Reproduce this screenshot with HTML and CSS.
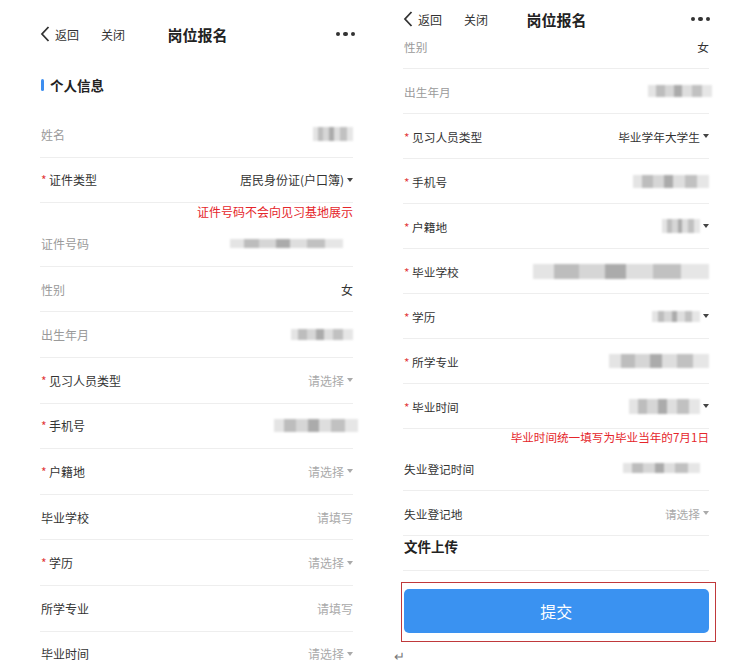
FILE: index.html
```html
<!DOCTYPE html>
<html lang="zh-CN">
<head>
    <meta charset="UTF-8">
    <meta name="viewport" content="width=device-width, initial-scale=1.0">
    <title>岗位报名</title>
    <link rel="stylesheet" href="styles.css">
</head>
<body>
    <!-- 左侧截图 -->
    <div class="phone phone-left">
        <div class="nav">
            <div class="nav-left">
                <svg class="back" width="10" height="16" viewBox="0 0 10 16"><path d="M8.5 1 L2 8 L8.5 15" fill="none" stroke="#333" stroke-width="1.8"/></svg>
                <span class="nav-link">返回</span>
                <span class="nav-link close">关闭</span>
            </div>
            <div class="nav-title">岗位报名</div>
            <div class="nav-more"><i></i><i></i><i></i></div>
        </div>

        <div class="section"><span class="bar"></span>个人信息</div>

        <div class="form">
            <div class="field">
                <span class="label muted">姓名</span>
                <span class="blur blur-name"></span>
            </div>
            <div class="field">
                <span class="label req">证件类型</span>
                <span class="value">居民身份证(户口簿)<i class="caret dark"></i></span>
            </div>
            <div class="note">证件号码不会向见习基地展示</div>
            <div class="field">
                <span class="label muted">证件号码</span>
                <span class="blur blur-id"></span>
            </div>
            <div class="field">
                <span class="label muted">性别</span>
                <span class="value">女</span>
            </div>
            <div class="field">
                <span class="label muted">出生年月</span>
                <span class="blur blur-birth"></span>
            </div>
            <div class="field">
                <span class="label req">见习人员类型</span>
                <span class="value placeholder">请选择<i class="caret"></i></span>
            </div>
            <div class="field">
                <span class="label req">手机号</span>
                <span class="blur blur-phone"></span>
            </div>
            <div class="field">
                <span class="label req">户籍地</span>
                <span class="value placeholder">请选择<i class="caret"></i></span>
            </div>
            <div class="field">
                <span class="label">毕业学校</span>
                <span class="value placeholder">请填写</span>
            </div>
            <div class="field">
                <span class="label req">学历</span>
                <span class="value placeholder">请选择<i class="caret"></i></span>
            </div>
            <div class="field">
                <span class="label">所学专业</span>
                <span class="value placeholder">请填写</span>
            </div>
            <div class="field">
                <span class="label">毕业时间</span>
                <span class="value placeholder">请选择<i class="caret"></i></span>
            </div>
        </div>
    </div>

    <!-- 右侧截图（已向下滚动） -->
    <div class="phone phone-right">
        <div class="nav nav-fixed">
            <div class="nav-left">
                <svg class="back" width="10" height="16" viewBox="0 0 10 16"><path d="M8.5 1 L2 8 L8.5 15" fill="none" stroke="#333" stroke-width="1.8"/></svg>
                <span class="nav-link">返回</span>
                <span class="nav-link close">关闭</span>
            </div>
            <div class="nav-title">岗位报名</div>
            <div class="nav-more"><i></i><i></i><i></i></div>
        </div>

        <div class="form form-scrolled">
            <div class="field">
                <span class="label muted">性别</span>
                <span class="value">女</span>
            </div>
            <div class="field">
                <span class="label muted">出生年月</span>
                <span class="blur blur-birth2"></span>
            </div>
            <div class="field">
                <span class="label req">见习人员类型</span>
                <span class="value">毕业学年大学生<i class="caret dark"></i></span>
            </div>
            <div class="field">
                <span class="label req">手机号</span>
                <span class="blur blur-phone2"></span>
            </div>
            <div class="field">
                <span class="label req">户籍地</span>
                <span class="value"><span class="blur blur-hukou"></span><i class="caret dark"></i></span>
            </div>
            <div class="field">
                <span class="label req">毕业学校</span>
                <span class="blur blur-school"></span>
            </div>
            <div class="field">
                <span class="label req">学历</span>
                <span class="value"><span class="blur blur-edu"></span><i class="caret dark"></i></span>
            </div>
            <div class="field">
                <span class="label req">所学专业</span>
                <span class="blur blur-major"></span>
            </div>
            <div class="field">
                <span class="label req">毕业时间</span>
                <span class="value"><span class="blur blur-grad"></span><i class="caret dark"></i></span>
            </div>
            <div class="note">毕业时间统一填写为毕业当年的7月1日</div>
            <div class="field">
                <span class="label">失业登记时间</span>
                <span class="blur blur-unemp"></span>
            </div>
            <div class="field">
                <span class="label">失业登记地</span>
                <span class="value placeholder">请选择<i class="caret"></i></span>
            </div>
            <div class="upload">文件上传</div>
        </div>

        <div class="submit-wrap">
            <button class="submit">提交</button>
        </div>
        <div class="return-mark">↵</div>
    </div>
</body>
</html>
```

FILE: styles.css
```css
body {
    display: flex;
    height: 666px;
    margin: 0;
    overflow: hidden;
    background: #fff;
    color: #333;
    font-family: "Noto Sans CJK SC", "Noto Sans", sans-serif;
}

.phone {
    flex: none;
}

.phone-left {
    width: 315px;
    margin-left: 40px;
}

.phone-right {
    width: 307px;
    margin-left: 48px;
}

/* 顶部导航 */
.nav {
    display: grid;
    grid-template-columns: 1fr auto 1fr;
    align-items: center;
    height: 68px;
}

.nav-fixed {
    position: relative;
    z-index: 1;
    height: 38px;
    background: #fff;
}

.nav-left {
    display: flex;
    align-items: center;
}

.back {
    display: block;
}

.nav-link {
    margin-left: 5px;
    font-size: 12px;
    color: #333;
}

.nav-link.close {
    margin-left: 22px;
}

.nav-title {
    font-size: 15px;
    font-weight: bold;
    color: #222;
}

.nav-more {
    display: flex;
    justify-content: flex-end;
    gap: 3px;
}

.nav-more i {
    width: 4.5px;
    height: 4.5px;
    border-radius: 50%;
    background: #333;
}

/* 分组标题 */
.section {
    display: flex;
    align-items: center;
    height: 44px;
    padding: 0 0 11px 1px;
    box-sizing: border-box;
    font-size: 13.5px;
    font-weight: bold;
    color: #222;
}

.bar {
    width: 3px;
    height: 12px;
    margin-right: 6px;
    border-radius: 2px;
    background: #3d8ef0;
}

/* 表单行 */
.form {
    margin-right: 2px;
}

.form-scrolled {
    margin-top: -14px;
    margin-right: 1px;
}

.field {
    display: flex;
    justify-content: space-between;
    align-items: center;
    height: 45.6px;
    padding-left: 1px;
    box-sizing: border-box;
    border-bottom: 1px solid #eeeeee;
    font-size: 12px;
}

.phone-right .field {
    height: 45px;
    font-size: 11.7px;
}

.label {
    color: #333;
}

.label.muted {
    color: #9a9a9a;
}

.label.req::before {
    content: "*";
    display: inline-block;
    width: 8px;
    color: #e23a3a;
}

.value {
    display: flex;
    align-items: center;
    color: #333;
}

.value.placeholder {
    color: #aaa;
}

.caret {
    width: 0;
    height: 0;
    margin-left: 3px;
    border-left: 3px solid transparent;
    border-right: 3px solid transparent;
    border-top: 4px solid #aaa;
}

.caret.dark {
    border-top-color: #444;
}

.note {
    height: 18px;
    line-height: 18px;
    text-align: right;
    font-size: 12px;
    color: #e5262b;
}

.phone-right .note {
    height: 17px;
    line-height: 17px;
    font-size: 11.6px;
}

/* 打码区域 */
.blur {
    display: inline-block;
    height: 12px;
    filter: blur(1px);
    background: linear-gradient(90deg, #e4e4e4 0 12%, #bdbdbd 12% 26%, #d6d6d6 26% 41%, #ababab 41% 53%, #dedede 53% 68%, #c1c1c1 68% 84%, #e6e6e6 84%);
}

.blur-name { width: 40px; height: 14px; }
.blur-id { width: 113px; height: 9px; margin-right: 10px; }
.blur-birth { width: 62px; height: 11px; }
.blur-phone { width: 84px; height: 13px; margin-right: -5px; }
.blur-birth2 { width: 64px; height: 12px; margin-right: -3px; }
.blur-phone2 { width: 76px; height: 13px; }
.blur-hukou { width: 38px; height: 14px; }
.blur-school { width: 176px; height: 15px; }
.blur-edu { width: 48px; height: 11px; }
.blur-major { width: 100px; height: 14px; }
.blur-grad { width: 71px; height: 15px; }
.blur-unemp { width: 77px; height: 10px; margin-right: 9px; }

/* 文件上传与提交 */
.upload {
    height: 35px;
    line-height: 20px;
    padding-left: 1px;
    box-sizing: border-box;
    border-bottom: 1px solid #eeeeee;
    font-size: 13.5px;
    font-weight: bold;
    color: #222;
}

.submit-wrap {
    width: 315px;
    height: 60px;
    margin: 11px 0 0 -2px;
    padding: 6px 6px 0 1.5px;
    box-sizing: border-box;
    border: 1.5px solid #c0393b;
}

.submit {
    display: block;
    width: 100%;
    height: 44px;
    border: none;
    border-radius: 5px;
    background: #3a92f1;
    color: #fff;
    font-family: inherit;
    font-size: 16px;
}

.return-mark {
    margin: 6px 0 0 -9px;
    font-size: 13px;
    line-height: 16px;
    color: #777;
}
```
